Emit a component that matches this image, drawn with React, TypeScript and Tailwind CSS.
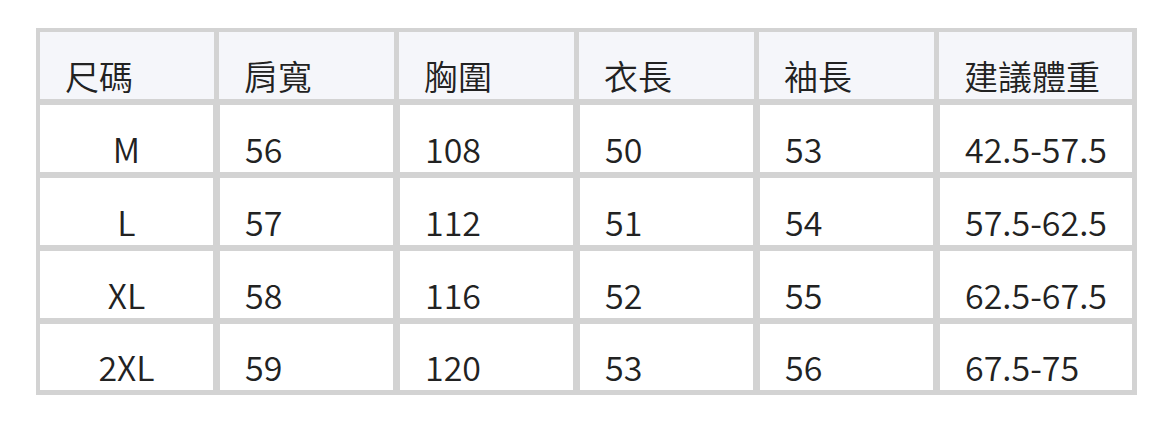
import React from "react";

const headers = ["尺碼", "肩寬", "胸圍", "衣長", "袖長", "建議體重"];
const rows = [
  ["M", "56", "108", "50", "53", "42.5-57.5"],
  ["L", "57", "112", "51", "54", "57.5-62.5"],
  ["XL", "58", "116", "52", "55", "62.5-67.5"],
  ["2XL", "59", "120", "53", "56", "67.5-75"],
];

const headW = ["w-[174px]", "w-[175px]", "w-[175px]", "w-[175px]", "w-[175px]", "w-[193px]"];
const bodyW = ["w-[173px]", "w-[173px]", "w-[173px]", "w-[173px]", "w-[173px]", "w-[192px]"];

export default function App() {
  return (
    <div className="w-[1172px] h-[422px] bg-white pt-[28px] pl-[36px]" style={{ fontFamily: '"Noto Sans CJK TC", "Noto Sans", sans-serif' }}>
      <div className="inline-flex flex-col bg-[#d3d3d3] pt-[4px] pl-[4px] pr-[5px] pb-[5px] gap-y-[6px] text-[34px] font-[350] text-[#222222]">
        <div className="flex gap-x-[5px]">
          {headers.map((h, i) => (
            <div key={i} className={`${headW[i]} h-[67px] bg-[#f5f6fa] flex items-end pl-[25px] pb-[6px] leading-[34px]`}>
              {h}
            </div>
          ))}
        </div>
        {rows.map((r, ri) => (
          <div key={ri} className="flex gap-x-[7px]">
            {r.map((c, i) => (
              <div
                key={i}
                className={`${bodyW[i]} ${ri === 3 ? "h-[66px]" : "h-[67px]"} bg-white flex items-end pb-[6px] leading-[34px] ${i === 0 ? "justify-center" : "pl-[25px]"}`}
              >
                {c}
              </div>
            ))}
          </div>
        ))}
      </div>
    </div>
  );
}
